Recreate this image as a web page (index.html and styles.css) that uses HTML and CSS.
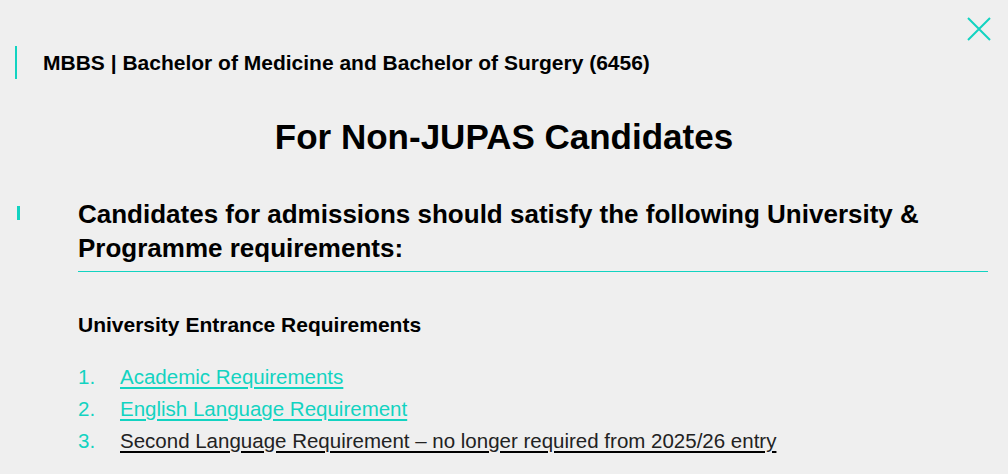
FILE: index.html
```html
<!DOCTYPE html>
<html lang="en">
<head>
<meta charset="utf-8">
<title>MBBS Non-JUPAS</title>
<link rel="stylesheet" href="styles.css">
</head>
<body>
<div class="modal">
  <button class="close" aria-label="Close">
    <svg width="26" height="26" viewBox="0 0 26 26"><path d="M2 2 L24 24 M24 2 L2 24" stroke="#12d3c1" stroke-width="2" fill="none"/></svg>
  </button>
  <div class="prog-title">MBBS | Bachelor of Medicine and Bachelor of Surgery (6456)</div>
  <h1 class="main-title">For Non-JUPAS Candidates</h1>
  <div class="section">
    <span class="mark"></span>
    <h2 class="section-title">Candidates for admissions should satisfy the following University &amp; Programme requirements:</h2>
  </div>
  <div class="content">
    <h3 class="sub-title">University Entrance Requirements</h3>
    <ol class="req-list">
      <li><span class="num">1.</span><a href="#" class="link">Academic Requirements</a></li>
      <li><span class="num">2.</span><a href="#" class="link">English Language Requirement</a></li>
      <li><span class="num">3.</span><a href="#" class="link dark">Second Language Requirement – no longer required from 2025/26 entry</a></li>
    </ol>
  </div>
</div>
</body>
</html>
```

FILE: styles.css
```css
html, body {
  margin: 0;
  padding: 0;
  background: #efefef;
}
body {
  font-family: "Liberation Sans", Arial, sans-serif;
  color: #000;
}
.modal {
  position: relative;
  width: 1008px;
  height: 474px;
  overflow: hidden;
}
.close {
  position: absolute;
  top: 16px;
  right: 16px;
  border: 0;
  background: none;
  padding: 0;
  width: 26px;
  height: 26px;
}
.prog-title {
  margin: 46px 0 0 15px;
  border-left: 2px solid #12d3c1;
  padding-left: 26px;
  height: 33px;
  line-height: 33px;
  font-size: 21px;
  font-weight: bold;
}
.main-title {
  margin: 38px 0 0 0;
  text-align: center;
  font-size: 35px;
  line-height: 40px;
  font-weight: bold;
}
.section {
  display: flex;
  margin-top: 40px;
}
.mark {
  width: 3px;
  height: 14px;
  background: #12d3c1;
  margin: 9px 0 0 17px;
  flex: none;
}
.section-title {
  margin: 0 20px 0 58px;
  font-size: 26px;
  line-height: 34px;
  font-weight: bold;
  padding-bottom: 6px;
  border-bottom: 1px solid #12d3c1;
  flex: 1;
}
.content {
  margin-left: 78px;
}
.sub-title {
  margin: 40px 0 0 0;
  font-size: 21px;
  font-weight: bold;
  line-height: 26px;
}
.req-list {
  list-style: none;
  margin: 23px 0 0 0;
  padding: 0;
  font-size: 20.5px;
  line-height: 32px;
}
.req-list li {
  display: flex;
}
.num {
  width: 42px;
  color: #12d3c1;
}
.link {
  color: #12d3c1;
  text-decoration: underline;
  text-decoration-thickness: 2px;
  text-underline-offset: 3px;
}
.link.dark {
  color: #222;
  text-decoration-color: #000;
}
```
